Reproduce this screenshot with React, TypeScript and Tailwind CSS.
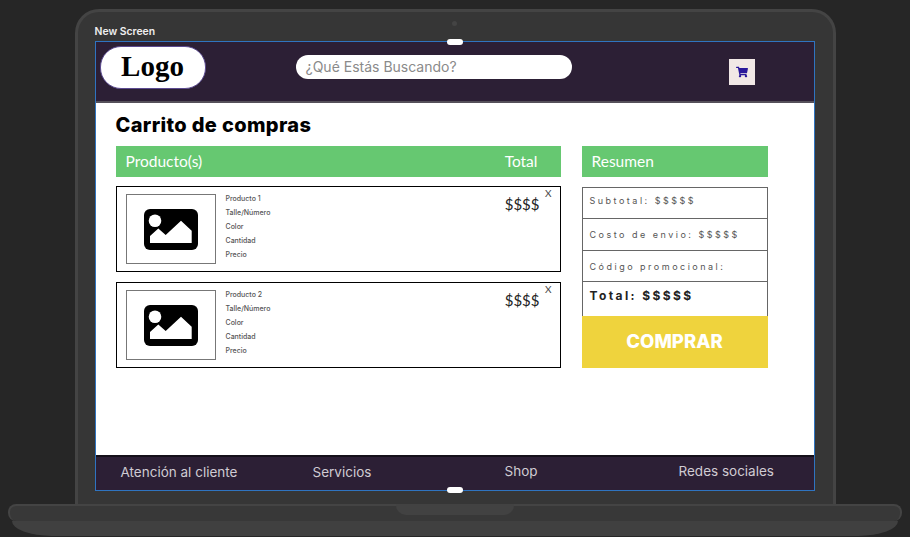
import { FaShoppingCart } from "react-icons/fa";

const inter = "font-['Inter',sans-serif]";
const lato = "font-['Lato',sans-serif]";

function ImageIcon() {
  return (
    <svg width="54" height="41" viewBox="0 0 54 41">
      <rect x="0" y="0" width="54" height="41" rx="6" fill="#000" />
      <circle cx="11" cy="11.7" r="6.3" fill="#fff" />
      <polygon points="6,27 14.3,19.4 21.7,26 37,11.7 47.7,21.7 47.7,34 6,34" fill="#fff" />
    </svg>
  );
}

function ProductCard({ name }: { name: string }) {
  return (
    <div className="relative flex h-[86px] w-[445px] border border-black pl-[9px] pt-[7px]">
      <div className="flex h-[70px] w-[90px] shrink-0 items-center justify-center border border-[#777]">
        <ImageIcon />
      </div>
      <ul className={`${inter} ml-[10px] -mt-[2px] flex flex-col text-[7px] font-medium leading-[14px] text-[#555]`}>
        <li>{name}</li>
        <li>Talle/Número</li>
        <li>Color</li>
        <li>Cantidad</li>
        <li>Precio</li>
      </ul>
      <span className={`${lato} ml-auto mr-[20px] text-[15px] leading-5 text-[#222]`}>$$$$</span>
      <span className={`${lato} absolute right-[8px] top-0 text-[10px] leading-[13px] text-[#444]`}>X</span>
    </div>
  );
}

function SummaryRow({ text, className }: { text: string; className: string }) {
  return (
    <div className={`${inter} flex items-start border-b border-[#666] pl-[7px] text-[9px] leading-3 tracking-[2.5px] text-[#555] ${className}`}>
      {text}
    </div>
  );
}

export default function App() {
  return (
    <div className="relative flex h-[537px] w-[910px] flex-col items-center overflow-hidden bg-[#262626] pt-[9px]">
      {/* laptop lid */}
      <div className="relative h-[495px] w-[761px] shrink-0 rounded-t-[24px] border-[3px] border-b-0 border-[#444] bg-[#363636] pl-[17px] pt-[14px]">
        <div className="absolute left-[374px] top-[9px] h-[5px] w-[5px] rounded-full bg-[#444]" />
        <p className={`${inter} h-[15px] text-[10.4px] font-semibold leading-3 text-[#eee]`}>New Screen</p>

        {/* screen */}
        <div className="relative flex h-[450px] w-[720px] flex-col border border-[#2f74c0] bg-white">
          <div className="absolute left-[351px] -top-[3px] h-[6px] w-[16px] rounded-[3px] bg-white" />
          <div className="absolute left-[351px] -bottom-[3px] h-[6px] w-[16px] rounded-[3px] bg-white" />

          <header className="flex h-[61px] shrink-0 items-start border-b-2 border-[#55505a] bg-[#2c1f35]">
            <div className="ml-[4px] mt-[4px] flex h-[43px] w-[106px] items-center justify-center rounded-[21px] border border-[#5b4a90] bg-white pb-[2px]">
              <span className="font-['Liberation_Serif',serif] text-[29px] font-bold leading-none text-black">Logo</span>
            </div>
            <div className={`${inter} ml-[90px] mt-[13px] flex h-[24px] w-[276px] items-center rounded-full bg-white pb-[2px] pl-[10px] text-[14px] text-[#8a8a8a]`}>
              ¿Qué Estás Buscando?
            </div>
            <div className="ml-[157px] mt-[17px] flex h-[26px] w-[26px] items-center justify-center bg-[#f1e8e6]">
              <FaShoppingCart className="text-[12px] text-[#2a189a]" />
            </div>
          </header>

          <main className="flex-1 pl-[20px] pt-[10px]">
            <h1 className={`${inter} h-[33px] text-[20px] font-extrabold leading-6 tracking-[0.35px] text-black`}>Carrito de compras</h1>
            <div className="flex gap-[21px]">
              <div className="flex w-[445px] flex-col">
                <div className={`${lato} mb-[9px] flex h-[31px] items-center justify-between bg-[#66c871] pl-[10px] pr-[23px] pt-[1px] text-[15.5px] text-white`}>
                  <span>Producto(s)</span>
                  <span>Total</span>
                </div>
                <div className="flex flex-col gap-[10px]">
                  <ProductCard name="Producto 1" />
                  <ProductCard name="Producto 2" />
                </div>
              </div>

              <div className="flex w-[186px] flex-col">
                <div className={`${lato} mb-[10px] flex h-[31px] items-center bg-[#66c871] pl-[10px] pt-[1px] text-[15.5px] text-white`}>Resumen</div>
                <div className="flex h-[181px] flex-col border-x border-t border-[#666]">
                  <SummaryRow text="Subtotal: $$$$$" className="h-[31px] pt-[7px]" />
                  <SummaryRow text="Costo de envio: $$$$$" className="h-[32px] pt-[10px]" />
                  <SummaryRow text="Código promocional:" className="h-[31px] pt-[10px]" />
                  <div className={`${inter} h-[34px] pl-[7px] pt-[6px] text-[12px] font-bold leading-4 tracking-[2.4px] text-[#222]`}>Total: $$$$$</div>
                  <div className={`${inter} -mx-px flex flex-1 items-center justify-center bg-[#efd33d] text-[18.5px] font-extrabold text-white`}>
                    COMPRAR
                  </div>
                </div>
              </div>
            </div>
          </main>

          <footer className={`${inter} flex h-[35px] shrink-0 items-center border-t-2 border-[#15101a] bg-[#2c1f35] pb-[3px] pl-[25px] text-[13.5px] text-[#d0cbd3]`}>
            <span className="w-[192px]">Atención al cliente</span>
            <span className="w-[192px]">Servicios</span>
            <span className="w-[174px] -translate-y-px">Shop</span>
            <span className="-translate-y-px">Redes sociales</span>
          </footer>
        </div>
      </div>

      {/* laptop base */}
      <div className="flex h-[33px] w-[894px] shrink-0 flex-col items-center">
        <div className="flex h-[17px] w-full justify-center rounded-t-[8px] rounded-bl-[8px] rounded-br-[8px] border-2 border-b-0 border-[#444] bg-[#383838]">
          <div className="-mt-[2px] h-[11px] w-[118px] rounded-b-[10px] bg-[#424242]" />
        </div>
        <div className="h-[15px] w-[calc(100%-8px)] rounded-bl-[40px_15px] rounded-br-[40px_15px] bg-[#404040]" />
      </div>
    </div>
  );
}
